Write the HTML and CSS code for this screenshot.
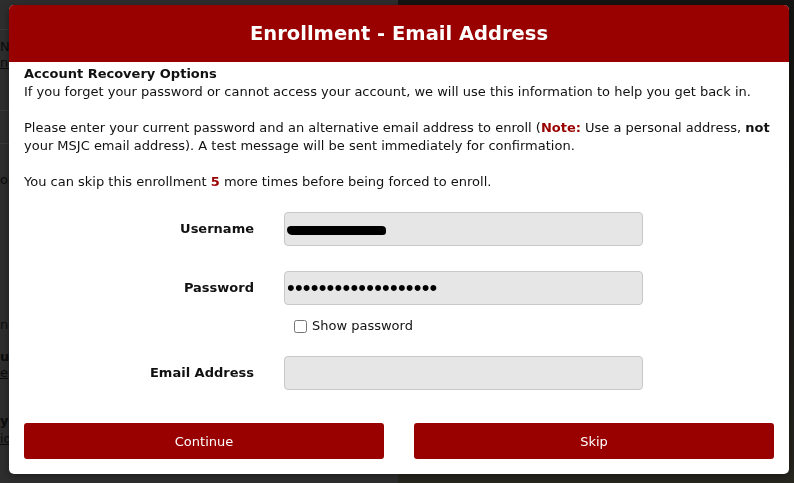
FILE: index.html
```html
<!DOCTYPE html>
<html lang="en">
<head>
    <meta charset="UTF-8">
    <meta name="viewport" content="width=device-width, initial-scale=1.0">
    <title>Enrollment - Email Address</title>
    <link rel="stylesheet" href="styles.css">
</head>
<body>
    <div class="backdrop">
        <div class="page-side">
            <div class="side-row top"></div>
            <div class="side-row names"><span>Na</span><a>nd</a></div>
            <div class="side-row short"></div>
            <div class="side-text first">or</div>
            <div class="side-text second">nt</div>
            <div class="side-text third"><b>u</b><a>e</a></div>
            <div class="side-text fourth"><b>y</b><a>io</a></div>
        </div>
        <div class="page-photo"></div>
    </div>

    <div class="modal">
        <div class="modal-header">
            <h2>Enrollment - Email Address</h2>
        </div>
        <div class="modal-body">
            <p class="intro">
                <strong>Account Recovery Options</strong><br>
                If you forget your password or cannot access your account, we will use this information to help you get back in.
            </p>
            <p>
                Please enter your current password and an alternative email address to enroll (<strong class="red">Note:</strong> Use a personal address, <strong>not</strong> your MSJC email address). A test message will be sent immediately for confirmation.
            </p>
            <p>
                You can skip this enrollment <strong class="red">5</strong> more times before being forced to enroll.
            </p>

            <form class="enroll-form" onsubmit="return false">
                <label class="field-label" for="username">Username</label>
                <div class="field">
                    <input type="text" id="username" readonly>
                    <span class="redacted"></span>
                </div>

                <label class="field-label pass-label" for="password">Password</label>
                <div class="field pass-field">
                    <input type="password" id="password" value="abcdefghijklmnopqrs" readonly>
                </div>

                <div></div>
                <label class="show-pass"><input type="checkbox"> Show password</label>

                <label class="field-label" for="email">Email Address</label>
                <div class="field">
                    <input type="text" id="email">
                </div>
            </form>

            <div class="actions">
                <button type="button">Continue</button>
                <button type="button">Skip</button>
            </div>
        </div>
    </div>
</body>
</html>
```

FILE: styles.css
```css
body {
    margin: 0;
    font-family: "DejaVu Sans", Verdana, sans-serif;
    background-color: #1b1a17;
    overflow: hidden;
}

.backdrop {
    display: flex;
    height: 100vh;
}

/* the page behind the dialog, mostly hidden */
.page-side {
    width: 398px;
    background-color: #2e2e2e;
    color: #0c0c0c;
    font-size: 13px;
    line-height: 16px;
}

.side-row {
    border-bottom: 1px solid #3a3a3a;
    box-sizing: border-box;
}

.side-row.top {
    height: 30px;
}

.side-row.names {
    height: 81px;
    padding-top: 9px;
}

.side-row.short {
    height: 33px;
}

.side-row span,
.side-text a,
.side-text b {
    display: block;
}

.side-row a,
.side-text a {
    display: block;
    text-decoration: underline;
}

.side-text.first {
    margin-top: 28px;
}

.side-text.second {
    margin-top: 129px;
}

.side-text.third {
    margin-top: 16px;
}

.side-text.fourth {
    margin-top: 31px;
    line-height: 18px;
}

.page-photo {
    flex: 1;
    background: linear-gradient(180deg, #141412 0%, #1c1b17 60%, #27261f 100%);
}

.modal {
    position: fixed;
    top: 5px;
    left: 9px;
    width: 780px;
    height: 469px;
    background-color: #fff;
    border-radius: 5px;
    overflow: hidden;
    box-shadow: 0 2px 8px rgba(0, 0, 0, 0.4);
}

.modal-header {
    background-color: #990000;
    height: 57px;
    display: flex;
    align-items: center;
    justify-content: center;
}

.modal-header h2 {
    margin: 0;
    color: #fff;
    font-size: 19.5px;
    font-weight: bold;
}

.modal-body {
    padding: 3px 15px 0;
    color: #111;
    font-size: 13px;
    line-height: 18px;
}

.modal-body p {
    margin: 0 0 18px;
}

.modal-body .red {
    color: #990000;
}

.enroll-form {
    display: grid;
    grid-template-columns: 230px 359px;
    column-gap: 30px;
    align-items: center;
    margin-top: 21px;
}

.field-label {
    text-align: right;
    font-weight: bold;
}

.field {
    position: relative;
}

.field input {
    width: 100%;
    height: 34px;
    box-sizing: border-box;
    border: 1px solid #c8c8c8;
    border-radius: 4px;
    background-color: #e6e6e6;
    padding: 0 4px;
    font-family: "DejaVu Sans", Verdana, sans-serif;
    font-size: 13px;
    color: #000;
}

.pass-label,
.pass-field {
    margin-top: 25px;
}

#password {
    font-family: "Liberation Sans", Arial, sans-serif;
    font-size: 22px;
    letter-spacing: 0.22px;
    padding-left: 2px;
}

.redacted {
    position: absolute;
    left: 3px;
    top: 14px;
    width: 99px;
    height: 9px;
    background-color: #000;
    border-radius: 5px 5px 4px 6px;
}

.show-pass {
    display: flex;
    align-items: center;
    gap: 5px;
    margin: 12px 0 21px 10px;
    font-size: 13px;
    font-weight: normal;
}

.show-pass input {
    margin: 0;
    width: 13px;
    height: 13px;
}

.actions {
    display: flex;
    gap: 30px;
    margin-top: 33px;
}

.actions button {
    flex: 1;
    height: 36px;
    border: none;
    border-radius: 3px;
    background-color: #990000;
    color: #fff;
    font-family: "DejaVu Sans", Verdana, sans-serif;
    font-size: 13px;
    cursor: pointer;
}
```
